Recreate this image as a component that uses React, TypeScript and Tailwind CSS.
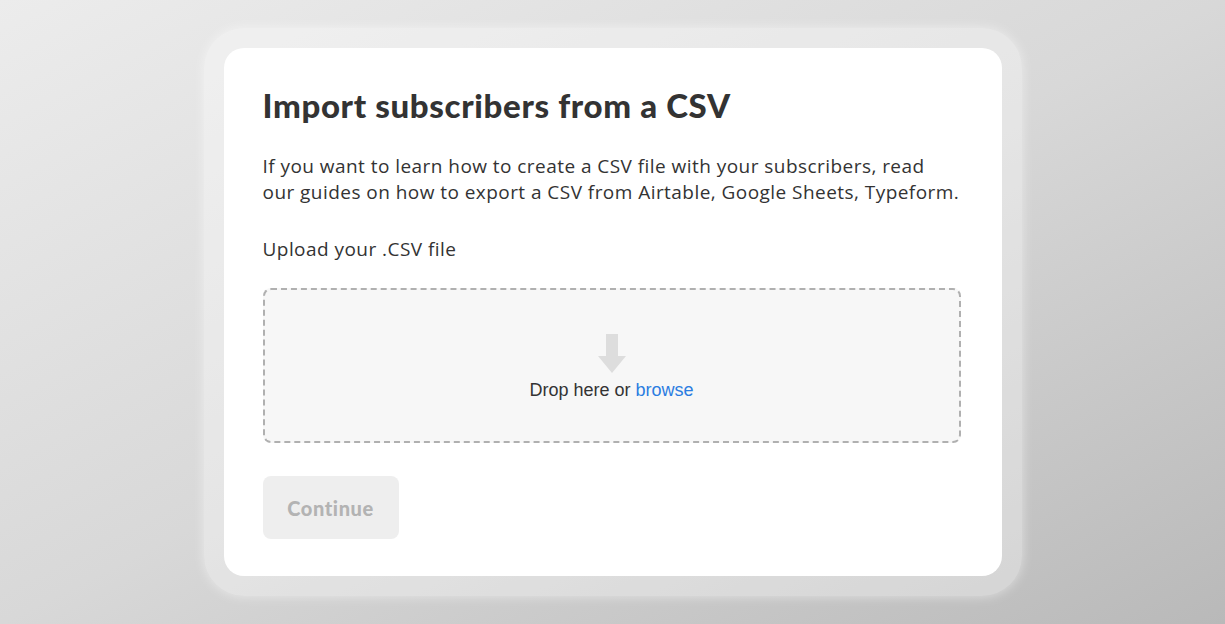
export default function App() {
  return (
    <div className="h-[624px] w-full flex items-center justify-center bg-gradient-to-br from-[#ececec] via-[#d8d8d8] to-[#b9b9b9]">
      {/* Soft frame */}
      <div className="rounded-[40px] bg-white/35 p-5 shadow-[0_0_12px_rgba(255,255,255,0.5)]">
        {/* Card */}
        <div className="w-[778px] h-[528px] bg-white rounded-[20px] px-[39px] pt-[37px] flex flex-col">
          <h1 className="text-[33px] leading-[40px] font-black text-[#333333] font-['Lato',sans-serif] tracking-[0.65px]">
            Import subscribers from a CSV
          </h1>

          <p className="mt-[28px] text-[19px] leading-[26px] text-[#333333] font-['Open_Sans',sans-serif] tracking-[0.45px]">
            If you want to learn how to create a CSV file with your subscribers, read
            <br />
            our guides on how to export a CSV from Airtable, Google Sheets, Typeform.
          </p>

          <p className="mt-[31px] text-[19px] leading-[26px] text-[#333333] font-['Open_Sans',sans-serif] tracking-[0.45px]">
            Upload your .CSV file
          </p>

          {/* Drop zone */}
          <div className="mt-[26px] w-[698px] h-[155px] rounded-lg border-2 border-dashed border-[#b0b0b0] bg-[#f7f7f7] flex flex-col items-center justify-center">
            <svg width="30" height="40" viewBox="0 0 30 40" className="mt-[4px]">
              <rect x="9" y="0" width="12" height="23" fill="#dddddd" />
              <polygon points="1,22 29,22 15,39" fill="#dddddd" />
            </svg>
            <div className="mt-[5px] text-[18px] leading-[22px] text-[#333333] font-['Liberation_Sans',Arial,sans-serif]">
              Drop here or <span className="text-[#2b7de1]">browse</span>
            </div>
          </div>

          <button className="mt-[33px] w-[136px] h-[63px] rounded-lg bg-[#eeeeee] text-[20px] font-black text-[#b3b3b3] font-['Lato',sans-serif] tracking-[0.6px]">
            Continue
          </button>
        </div>
      </div>
    </div>
  );
}
